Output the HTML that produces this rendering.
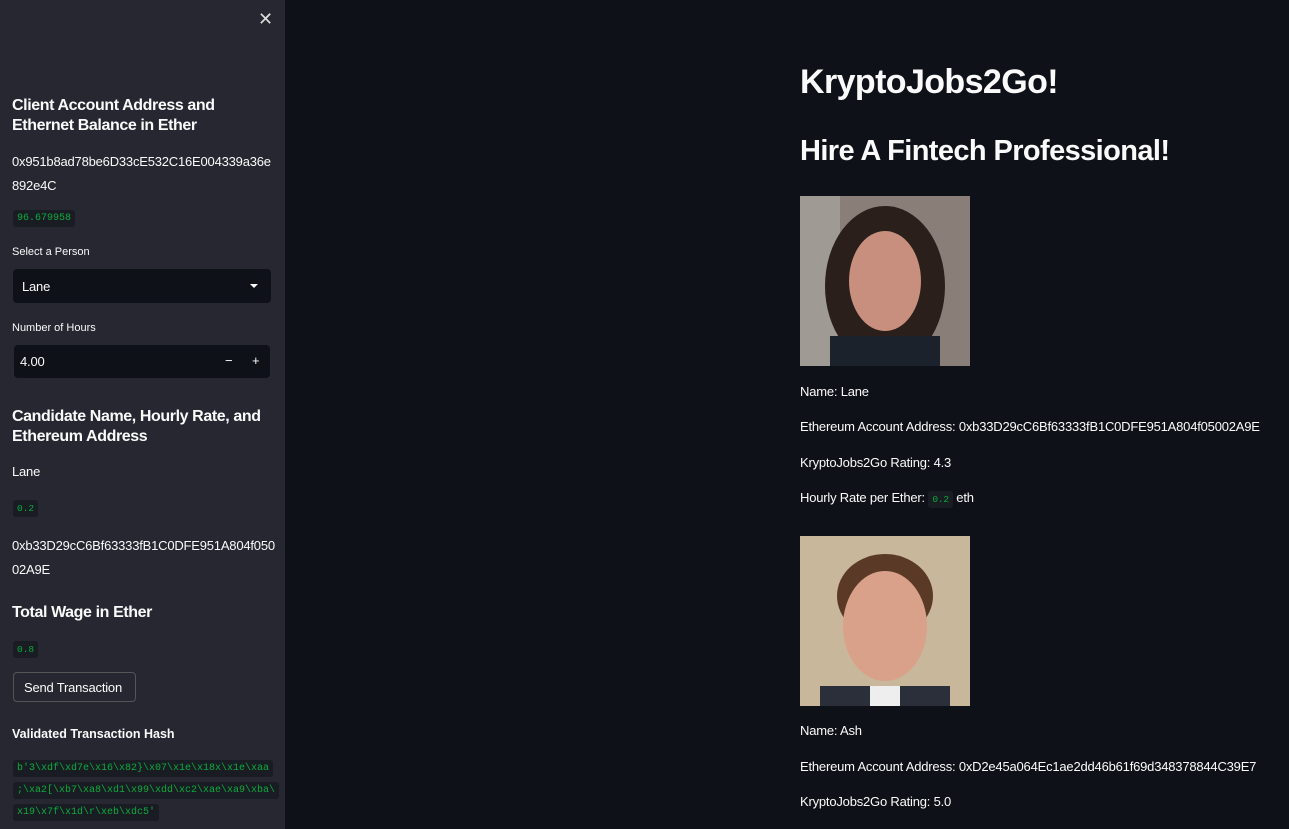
<!DOCTYPE html>
<html><head><meta charset="utf-8"><style>
*{margin:0;padding:0;box-sizing:border-box}
body{width:1289px;height:829px;overflow:hidden;background:#0e1117;color:#fafafa;font-family:"Liberation Sans",sans-serif;position:relative}
.sb{position:absolute;left:0;top:0;width:285px;height:829px;background:#262730}
.a{position:absolute;white-space:nowrap}
.h3{font-weight:bold;font-size:16px;letter-spacing:-0.4px;line-height:20px}
.p{font-size:13px;letter-spacing:-0.2px}
.lbl{font-size:11px}
.code{font-family:"Liberation Mono",monospace;color:#09ab3b;background:#1a1c24;font-size:9.5px;padding:3px 4px;border-radius:3px}
.box{position:absolute;background:#0e1117;border-radius:4px}
</style></head><body>
<div class="sb"></div>
<div class="a" style="left:258px;top:9px;font-size:18px;color:#ddd">✕</div>
<div class="a h3" style="left:12px;top:96px">Client Account Address and<br>Ethernet Balance in Ether</div>
<div class="a p" style="left:12px;top:150px;line-height:24px">0x951b8ad78be6D33cE532C16E004339a36e<br>892e4C</div>
<div class="a code" style="left:13px;top:210px;font-size:10px">96.679958</div>
<div class="a lbl" style="left:12px;top:246px">Select a Person</div>
<div class="box" style="left:13px;top:269px;width:258px;height:34px"></div>
<div class="a p" style="left:22px;top:279px">Lane</div>
<div class="a" style="left:250px;top:284px;width:0;height:0;border-left:4px solid transparent;border-right:4px solid transparent;border-top:4px solid #fff"></div>
<div class="a lbl" style="left:12px;top:322px">Number of Hours</div>
<div class="box" style="left:14px;top:345px;width:256px;height:33px"></div>
<div class="a p" style="left:20px;top:354px">4.00</div>
<div class="a p" style="left:225px;top:353px">−</div>
<div class="a p" style="left:252px;top:353px">+</div>
<div class="a h3" style="left:12px;top:407px">Candidate Name, Hourly Rate, and<br>Ethereum Address</div>
<div class="a p" style="left:12px;top:464px">Lane</div>
<div class="a code" style="left:13px;top:500px">0.2</div>
<div class="a p" style="left:12px;top:534px;line-height:24px">0xb33D29cC6Bf63333fB1C0DFE951A804f050<br>02A9E</div>
<div class="a h3" style="left:12px;top:603px">Total Wage in Ether</div>
<div class="a code" style="left:13px;top:641px">0.8</div>
<div class="a p" style="left:13px;top:672px;width:123px;height:30px;border:1px solid #555;border-radius:4px;padding:7px 0 0 10px">Send Transaction</div>
<div class="a" style="left:12px;top:727px;font-weight:bold;font-size:12.5px">Validated Transaction Hash</div>
<div class="a code" style="left:13px;top:760px;font-size:10px">b'3\xdf\xd7e\x16\x82}\x07\x1e\x18x\x1e\xaa</div>
<div class="a code" style="left:13px;top:782px;font-size:10px">;\xa2[\xb7\xa8\xd1\x99\xdd\xc2\xae\xa9\xba\</div>
<div class="a code" style="left:13px;top:804px;font-size:10px">x19\x7f\x1d\r\xeb\xdc5'</div>

<div class="a" style="left:800px;top:63px;font-size:34px;font-weight:bold;letter-spacing:-0.6px">KryptoJobs2Go!</div>
<div class="a" style="left:800px;top:135px;font-size:29px;font-weight:bold;letter-spacing:-0.6px">Hire A Fintech Professional!</div>
<svg class="a" style="left:800px;top:196px" width="170" height="170"><rect width="170" height="170" fill="#8a7f78"/><rect width="40" height="170" fill="#a09a94"/><ellipse cx="85" cy="90" rx="60" ry="80" fill="#2a1f1a"/><ellipse cx="85" cy="85" rx="36" ry="50" fill="#c98f7e"/><rect x="30" y="140" width="110" height="30" fill="#1c222c"/></svg>
<div class="a p" style="left:800px;top:384px">Name: Lane</div>
<div class="a p" style="left:800px;top:419px">Ethereum Account Address: 0xb33D29cC6Bf63333fB1C0DFE951A804f05002A9E</div>
<div class="a p" style="left:800px;top:455px">KryptoJobs2Go Rating: 4.3</div>
<div class="a p" style="left:800px;top:490px">Hourly Rate per Ether: <span class="code">0.2</span> eth</div>
<svg class="a" style="left:800px;top:536px" width="170" height="170"><rect width="170" height="170" fill="#c9b79c"/><ellipse cx="85" cy="60" rx="48" ry="42" fill="#5a3a26"/><ellipse cx="85" cy="90" rx="42" ry="55" fill="#d9a08a"/><rect x="20" y="150" width="130" height="20" fill="#2a2f3a"/><rect x="70" y="150" width="30" height="20" fill="#eee"/></svg>
<div class="a p" style="left:800px;top:723px">Name: Ash</div>
<div class="a p" style="left:800px;top:759px">Ethereum Account Address: 0xD2e45a064Ec1ae2dd46b61f69d348378844C39E7</div>
<div class="a p" style="left:800px;top:794px">KryptoJobs2Go Rating: 5.0</div>
</body></html>
